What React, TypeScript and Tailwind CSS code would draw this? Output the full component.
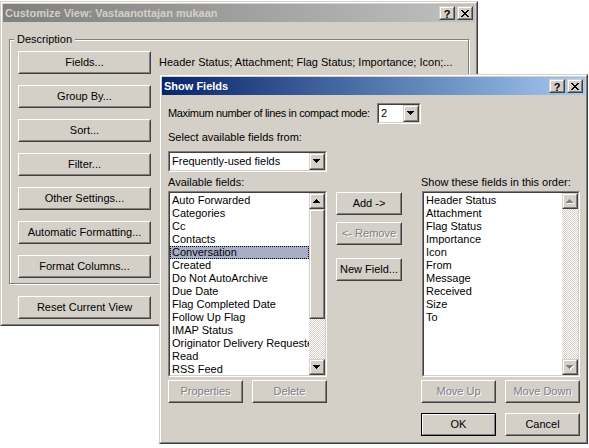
import React from "react";

type P = { className?: string; children?: React.ReactNode };

function Raised({ className = "", children, inner = "" }: P & { inner?: string }) {
  return (
    <div className={`border border-t-white border-l-white border-r-[#404040] border-b-[#404040] ${className}`}>
      <div className={`w-full h-full border border-t-[#d4d0c8] border-l-[#d4d0c8] border-r-[#808080] border-b-[#808080] bg-[#d4d0c8] ${inner}`}>
        {children}
      </div>
    </div>
  );
}

function Bevel({ className = "", children, inner = "" }: P & { inner?: string }) {
  return (
    <div className={`border border-t-[#d4d0c8] border-l-[#d4d0c8] border-r-[#404040] border-b-[#404040] ${className}`}>
      <div className={`w-full h-full border border-t-white border-l-white border-r-[#808080] border-b-[#808080] bg-[#d4d0c8] ${inner}`}>
        {children}
      </div>
    </div>
  );
}

function Sunken({ className = "", children, inner = "" }: P & { inner?: string }) {
  return (
    <div className={`border border-t-[#808080] border-l-[#808080] border-r-white border-b-white ${className}`}>
      <div className={`w-full h-full border border-t-[#404040] border-l-[#404040] border-r-[#d4d0c8] border-b-[#d4d0c8] bg-white ${inner}`}>
        {children}
      </div>
    </div>
  );
}

function Btn({ className = "", children, disabled }: P & { disabled?: boolean }) {
  return (
    <Raised className={`h-[23px] ${className}`} inner="flex items-center justify-center">
      <span className={disabled ? "text-[#808080] [text-shadow:1px_1px_0_#ffffff]" : "text-black"}>{children}</span>
    </Raised>
  );
}

function DefBtn({ className = "", children }: P) {
  return (
    <div className={`h-[23px] border border-black ${className}`}>
      <div className="w-full h-full border border-t-white border-l-white border-r-[#808080] border-b-[#808080] bg-[#d4d0c8] flex items-center justify-center">
        {children}
      </div>
    </div>
  );
}

function Arrow({ up, disabled }: { up?: boolean; disabled?: boolean }) {
  const d = up
    ? "M3 0h1v1h-1z M2 1h3v1h-3z M1 2h5v1h-5z M0 3h7v1h-7z"
    : "M0 0h7v1h-7z M1 1h5v1h-5z M2 2h3v1h-3z M3 3h1v1h-1z";
  return (
    <svg width="8" height="5" viewBox="0 0 8 5" shapeRendering="crispEdges" className="block">
      {disabled && <path d={d} fill="#ffffff" transform="translate(1 1)" />}
      <path d={d} fill={disabled ? "#808080" : "#000000"} />
    </svg>
  );
}

const dither =
  "bg-[image:repeating-conic-gradient(#d4d0c8_0%_25%,#ffffff_0%_50%)] bg-[length:2px_2px]";

function VScroll({ disabled }: { disabled?: boolean }) {
  return (
    <div className="w-[16px] h-full flex flex-col shrink-0">
      <Bevel className="h-[16px] w-[16px]" inner="flex items-center justify-center">
        <Arrow up disabled={disabled} />
      </Bevel>
      {!disabled && <Bevel className="h-[110px] w-[16px]" />}
      <div className={`flex-1 ${dither}`} />
      <Bevel className="h-[16px] w-[16px]" inner="flex items-center justify-center">
        <Arrow disabled={disabled} />
      </Bevel>
    </div>
  );
}

function Combo({ className = "", text }: { className?: string; text: string }) {
  return (
    <Sunken className={`h-[21px] ${className}`} inner="flex">
      <div className="flex-1 pl-[2px] leading-[17px] whitespace-nowrap overflow-hidden">{text}</div>
      <Bevel className="w-[16px] h-full" inner="flex items-center justify-center">
        <Arrow />
      </Bevel>
    </Sunken>
  );
}

function CloseGlyph() {
  return (
    <svg width="8" height="7" viewBox="0 0 8 7" shapeRendering="crispEdges" className="block">
      <path
        d="M0 0h2v1h-2z M6 0h2v1h-2z M1 1h2v1h-2z M5 1h2v1h-2z M2 2h4v1h-4z M3 3h2v1h-2z M2 4h4v1h-4z M1 5h2v1h-2z M5 5h2v1h-2z M0 6h2v1h-2z M6 6h2v1h-2z"
        fill="#000"
      />
    </svg>
  );
}

function TitleBar({ title, active }: { title: string; active?: boolean }) {
  return (
    <div
      className={`h-[18px] flex items-center ${
        active ? "bg-linear-to-r from-[#0a246a] to-[#a6caf0] text-white" : "bg-linear-to-r from-[#808080] to-[#c0c0c0] text-[#d4d0c8]"
      }`}
    >
      <div className="flex-1 pl-[2px] font-bold text-[11px] leading-[13px] whitespace-nowrap">{title}</div>
      <div className="flex gap-[2px] mr-[2px]">
        <Bevel className="w-[16px] h-[14px]" inner="flex items-center justify-center">
          <span className="font-bold text-black text-[11px] leading-[10px] pt-[1px]">?</span>
        </Bevel>
        <Bevel className="w-[16px] h-[14px]" inner="flex items-center justify-center">
          <CloseGlyph />
        </Bevel>
      </div>
    </div>
  );
}

function Window({ className = "", children }: P) {
  return (
    <div className={`border border-t-[#d4d0c8] border-l-[#d4d0c8] border-r-[#404040] border-b-[#404040] ${className}`}>
      <div className="w-full h-full border border-t-white border-l-white border-r-[#808080] border-b-[#808080] bg-[#d4d0c8] p-[1px]">
        {children}
      </div>
    </div>
  );
}

const available = [
  "Auto Forwarded",
  "Categories",
  "Cc",
  "Contacts",
  "Conversation",
  "Created",
  "Do Not AutoArchive",
  "Due Date",
  "Flag Completed Date",
  "Follow Up Flag",
  "IMAP Status",
  "Originator Delivery Requested",
  "Read",
  "RSS Feed",
];

const shown = [
  "Header Status",
  "Attachment",
  "Flag Status",
  "Importance",
  "Icon",
  "From",
  "Message",
  "Received",
  "Size",
  "To",
];

function ListBox({ items, selected, disabledScroll, className = "" }: { items: string[]; selected?: number; disabledScroll?: boolean; className?: string }) {
  return (
    <Sunken className={`h-[186px] ${className}`} inner="flex overflow-hidden">
      <div className="flex-1 min-w-0 pt-[1px] overflow-hidden">
        {items.map((it, i) => (
          <div
            key={it}
            className={`h-[13px] leading-[13px] px-[2px] whitespace-nowrap overflow-hidden ${
              i === selected ? "bg-[#a6aec8] outline-1 outline-dotted outline-black -outline-offset-1" : ""
            }`}
          >
            {it}
          </div>
        ))}
      </div>
      <VScroll disabled={disabledScroll} />
    </Sunken>
  );
}

const bgButtons = ["Fields...", "Group By...", "Sort...", "Filter...", "Other Settings...", "Automatic Formatting...", "Format Columns..."];

export default function App() {
  return (
    <div className="relative w-[589px] h-[448px] bg-white overflow-hidden font-['Liberation_Sans',Arial,sans-serif] text-[11px] leading-[13px] text-black">
      {/* Background dialog */}
      <Window className="absolute left-0 top-[1px] w-[478px] h-[325px]">
        <TitleBar title="Customize View: Vastaanottajan mukaan" />
        <div className="pl-[6px] pt-[17px]">
          <div className="relative w-[460px] h-[245px] border border-[#808080] shadow-[inset_1px_1px_0_#ffffff,1px_1px_0_#ffffff] pt-[11px] pl-[8px]">
            <span className="absolute top-[-7px] left-[4px] px-[3px] bg-[#d4d0c8] leading-[13px]">Description</span>
            <div className="flex flex-col gap-[11px]">
              {bgButtons.map((b, i) => (
                <div key={b} className="flex items-center">
                  <Btn className="w-[133px]">{b}</Btn>
                  {i === 0 && (
                    <span className="ml-[8px] whitespace-nowrap">
                      Header Status; Attachment; Flag Status; Importance; Icon;...
                    </span>
                  )}
                </div>
              ))}
            </div>
          </div>
          <Btn className="w-[133px] mt-[12px] ml-[9px]">Reset Current View</Btn>
        </div>
      </Window>

      {/* Show Fields dialog */}
      <Window className="absolute left-[159px] top-[74px] w-[429px] h-[370px]">
        <TitleBar title="Show Fields" active />
        <div className="pl-[6px]">
          <div className="mt-[8px] flex items-center">
            <div className="w-[209px] whitespace-nowrap tracking-[-0.35px]">Maximum number of lines in compact mode:</div>
            <Combo className="w-[44px]" text="2" />
          </div>
          <div className="mt-[7px] h-[13px] whitespace-nowrap">Select available fields from:</div>
          <Combo className="w-[159px] mt-[7px]" text="Frequently-used fields" />
          <div className="mt-[4px] flex">
            <div className="w-[159px]">
              <div className="h-[13px] whitespace-nowrap">Available fields:</div>
              <ListBox items={available} selected={4} className="mt-[2px] w-[159px]" />
              <div className="mt-[3px] flex gap-[9px]">
                <Btn className="w-[75px]" disabled>Properties</Btn>
                <Btn className="w-[75px]" disabled>Delete</Btn>
              </div>
            </div>
            <div className="ml-[9px] w-[66px] pt-[16px]">
              <Btn className="w-[66px]">Add -&gt;</Btn>
              <Btn className="w-[66px] mt-[7px]" disabled>&lt;- Remove</Btn>
              <Btn className="w-[66px] mt-[13px]">New Field...</Btn>
            </div>
            <div className="ml-[19px] w-[159px]">
              <div className="h-[13px] whitespace-nowrap">Show these fields in this order:</div>
              <ListBox items={shown} disabledScroll className="mt-[2px] ml-[1px] w-[158px]" />
              <div className="mt-[3px] flex gap-[9px]">
                <Btn className="w-[75px]" disabled>Move Up</Btn>
                <Btn className="w-[75px]" disabled>Move Down</Btn>
              </div>
              <div className="mt-[10px] flex gap-[9px]">
                <DefBtn className="w-[75px]">OK</DefBtn>
                <Btn className="w-[75px]">Cancel</Btn>
              </div>
            </div>
          </div>
        </div>
      </Window>
    </div>
  );
}
